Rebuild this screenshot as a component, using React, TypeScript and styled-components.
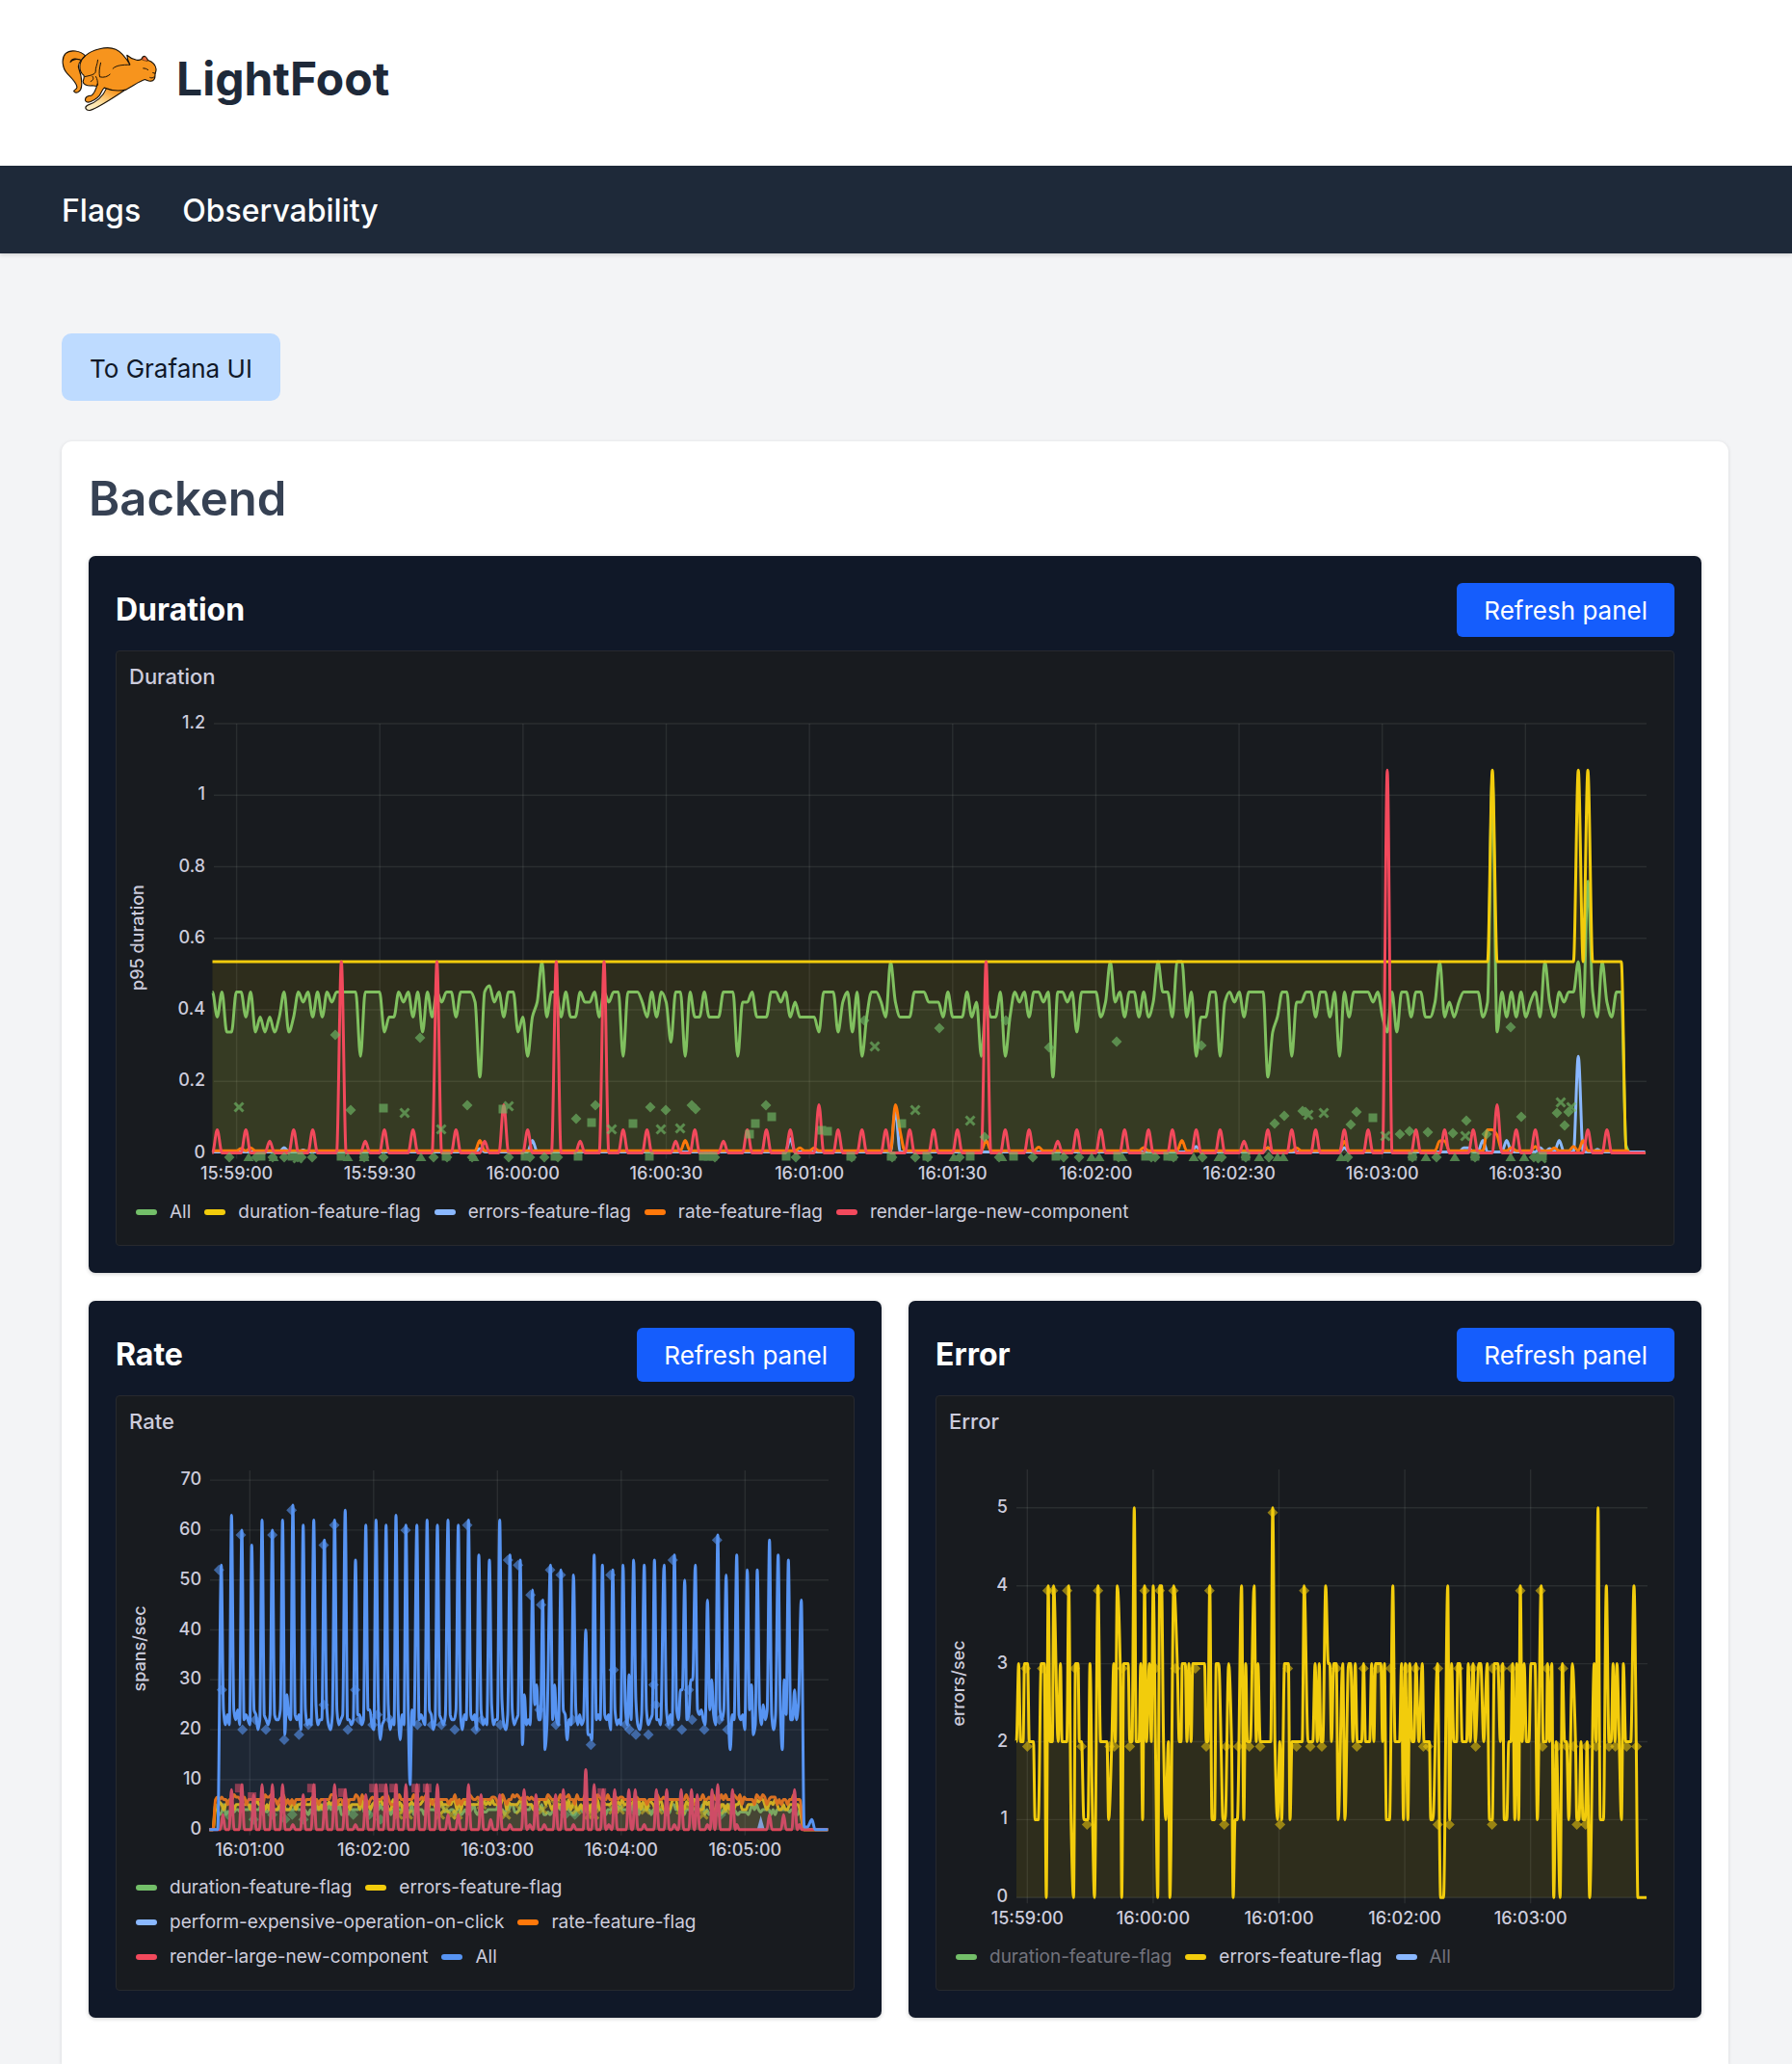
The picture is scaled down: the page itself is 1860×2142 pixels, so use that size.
import React from "react";
import styled, { createGlobalStyle } from "styled-components";

/* ---------- colours ---------- */

const color = {
  green: "#73bf69",
  yellow: "#f2cc0c",
  lightBlue: "#8ab8ff",
  orange: "#ff780a",
  red: "#f2495c",
  blue: "#5794f2",
  text: "#ccccdc",
  grid: "rgba(204, 220, 204, 0.1)",
};

/* ---------- curve helpers ---------- */

type Point = [number, number];

/* Monotone cubic path: smooth, and never overshoots a sample. */
function curve(points: Point[]): string {
  const n = points.length;
  const slope: number[] = [];
  for (let i = 0; i < n - 1; i++) {
    slope.push((points[i + 1][1] - points[i][1]) / (points[i + 1][0] - points[i][0]));
  }
  const tangent = points.map((_, i) => {
    if (i === 0 || i === n - 1) return 0;
    const a = slope[i - 1];
    const b = slope[i];
    return a * b <= 0 ? 0 : (2 * a * b) / (a + b);
  });
  let d = `M${points[0][0].toFixed(1)} ${points[0][1].toFixed(1)}`;
  for (let i = 0; i < n - 1; i++) {
    const [x0, y0] = points[i];
    const [x1, y1] = points[i + 1];
    const h = (x1 - x0) / 3;
    d += `C${(x0 + h).toFixed(1)} ${(y0 + tangent[i] * h).toFixed(1)} ${(x1 - h).toFixed(1)} ${(y1 - tangent[i + 1] * h).toFixed(1)} ${x1.toFixed(1)} ${y1.toFixed(1)}`;
  }
  return d;
}

function parsePairs(source: string): Point[] {
  return source
    .trim()
    .split(/\s+/)
    .map((item) => item.split(":").map(Number) as Point);
}

interface SeriesProps {
  points: Point[];
  stroke: string;
  base: number;
  fill?: number;
  width?: number;
}

function Series({ points, stroke, base, fill = 0, width = 3 }: SeriesProps) {
  const d = curve(points);
  const last = points[points.length - 1][0];
  return (
    <g>
      {fill > 0 && <path d={`${d}L${last} ${base}L${points[0][0]} ${base}Z`} fill={stroke} opacity={fill} />}
      <path d={d} fill="none" stroke={stroke} strokeWidth={width} strokeLinejoin="round" />
    </g>
  );
}

type Shape = "diamond" | "square" | "cross" | "triangle";

function Exemplar({ shape, x, y, fill }: { shape: Shape; x: number; y: number; fill: string }) {
  switch (shape) {
    case "diamond":
      return <path d={`M${x - 5.5} ${y}l5.5 -5.5l5.5 5.5l-5.5 5.5z`} fill={fill} />;
    case "square":
      return <path d={`M${x - 4.5} ${y - 4.5}h9v9h-9z`} fill={fill} />;
    case "triangle":
      return <path d={`M${x - 5.5} ${y + 4}l5.5 -9l5.5 9z`} fill={fill} />;
    default:
      return <path d={`M${x - 4.5} ${y - 4.5}l9 9m0 -9l-9 9`} stroke={fill} strokeWidth={3} />;
  }
}

interface AxisProps {
  left: number;
  right: number;
  top: number;
  bottom: number;
  rows: { at: number; label: string }[];
  columns: { at: number; label: string }[];
  tickY: number;
  name: string;
  nameX: number;
  nameY: number;
}

function Axes({ left, right, top, bottom, rows, columns, tickY, name, nameX, nameY }: AxisProps) {
  return (
    <g>
      {rows.map((row) => (
        <g key={row.label}>
          <line x1={left} x2={right} y1={row.at} y2={row.at} stroke={color.grid} strokeWidth={1.4} />
          <AxisText x={left - 9} y={row.at + 5} textAnchor="end">
            {row.label}
          </AxisText>
        </g>
      ))}
      {columns.map((column) => (
        <g key={column.label}>
          <line x1={column.at} x2={column.at} y1={top} y2={bottom + 6} stroke={color.grid} strokeWidth={1.4} />
          <AxisText x={column.at} y={tickY} textAnchor="middle">
            {column.label}
          </AxisText>
        </g>
      ))}
      <AxisText transform={`translate(${nameX} ${nameY}) rotate(-90)`} textAnchor="middle">
        {name}
      </AxisText>
    </g>
  );
}

/* ---------- duration chart: one sample a second ---------- */

const DURATION_LEVELS: Record<string, number> = {
  A: 0.45, B: 0.422, C: 0.38, D: 0.338, E: 0.31, F: 0.27, G: 0.212, H: 0.535, I: 0.467, K: 1.05, L: 0.76, O: 0.02, Z: 0,
};

/* Ten samples to a group. */
const DURATION_ALL = [
  "ACADDAACAD CDCDCADCAB ACACABAAAA AFAAAADCCA BACADACABA",
  "ACAAABGAIB ACAADCFCBH CAACACCABB ACABAAFAAA BCACABEAAF",
  "ACCACCCAAA FBBACCCAAB ACBCCCCDAA ADBADAFCAA BCHBCCCAAA",
  "BBBCACCCAC BFBCCAFCAB ACAABAGAAB ADAAAACBHB ACAACACBHA",
  "ACHHCAFCCA AFBABACAAA AGDCAAFBBA ACAACAFACA AAABACDADA",
  "ACAACCBHCB CBAAAACBKD ACACACBACH BCABAAHCLA CHBCAAOZZZ Z",
]
  .join("")
  .replace(/ /g, "");

const dx = (second: number) => 220.5 + second * 4.957;
const dy = (value: number) => 1196.5 - value * 371.2;

function sparse(base: number, peaks: string, count = 301): Point[] {
  const values = Array.from({ length: count }, () => base);
  parsePairs(peaks).forEach(([i, v]) => {
    values[i] = v;
  });
  return values.map((v, i) => [dx(i), dy(v)]);
}

const durationAll: Point[] = DURATION_ALL.split("").map((level, i) => [dx(i), dy(DURATION_LEVELS[level])]);
const durationFlag = sparse(0.535, "268:1.07 286:1.07 288:1.07 296:0.01 297:0 298:0 299:0 300:0");
const durationErrors = sparse(
  0.003,
  "15:0.015 19:0.008 67:0.035 56:0.012 121:0.04 143:0.12 206:0.018 221:0.015 237:0.015 262:0.014 263:0.014 266:0.035 271:0.035 278:0.015 280:0.012 282:0.035 286:0.27 290:0.01"
);
const durationRate = sparse(
  0.006,
  "6:0.012 8:0.014 56:0.035 99:0.035 123:0.014 126:0.014 143:0.135 144:0.06 162:0.035 173:0.016 195:0.015 203:0.035 221:0.015 227:0.014 237:0.032 257:0.034 258:0.034 267:0.065 268:0.065 269:0.05 272:0.015 277:0.018 281:0.014 285:0.018 287:0.035 297:0 298:0 299:0 300:0"
);
const durationRender = sparse(
  0,
  "1:.065 7:.065 12:.033 17:.065 21:.065 27:.535 32:.033 36:.065 42:.065 47:.535 51:.065 57:.033 61:.135 66:.065 72:.535 77:.033 82:.535 86:.065 91:.065 97:.033 101:.065 107:.033 112:.065 116:.065 121:.065 127:.135 131:.065 136:.065 141:.065 146:.065 151:.065 156:.065 162:.535 166:.065 171:.065 177:.033 181:.065 186:.065 191:.065 196:.065 201:.065 206:.065 211:.065 216:.033 221:.065 226:.065 231:.065 237:.065 242:.065 246:1.07 252:.065 258:.065 264:.065 269:.135 273:.065 277:.065 288:.065 292:.065"
);

const DURATION_EXEMPLARS: Record<Shape, string> = {
  cross:
    "248:1149 420:1155 458:1172 528:1148 635:1172 686:1172 706:1171 908:1086 950:1152 1007:1163 1358:1157 1374:1155 1438:1179 1521:1179 1620:1144 1631:1149 1600:1202 309:1202",
  diamond:
    "348:1074 436:1077 364:1152 485:1147 598:1161 618:1147 675:1149 691:1152 718:1147 722:1151 795:1147 975:1067 1159:1081 897:1059 1044:1059 1089:1087 1247:1085 1022:1180 1323:1166 1333:1158 1352:1153 1355:1154 1402:1167 1408:1154 1453:1177 1463:1174 1482:1175 1508:1176 1522:1163 1568:1066 1579:1159 1616:1155 1624:1168 1628:1154 1543:1177 " +
    [238, 266, 283, 295, 309, 313, 324, 378, 398, 450, 464, 490, 528, 550, 565, 579, 742, 826, 884, 926, 950, 963, 996, 1037, 1072, 1104, 1120, 1161, 1195, 1199, 1218, 1248, 1268, 1293, 1317, 1399, 1466, 1491, 1531, 1592, 1596]
      .map((x) => `${x}:1201`)
      .join(" "),
  square:
    "398:1150 522:1151 614:1165 657:1166 778:1177 784:1166 801:1159 853:1173 859:1174 936:1166 1425:1160 " +
    [271, 303, 310, 354, 378, 463, 545, 576, 600, 674, 730, 735, 740, 816, 883, 925, 962, 1007, 1052, 1096, 1160, 1189, 1212, 1217, 1293, 1466, 1531, 1601]
      .map((x) => `${x}:1200`)
      .join(" "),
  triangle: [258, 284, 361, 378, 437, 492, 990, 1040, 1133, 1141, 1165, 1239, 1265, 1307, 1326, 1332, 1392, 1480, 1510, 1568, 1582]
    .map((x) => `${x}:1201`)
    .join(" "),
};

const DURATION_TIMES = [
  "15:59:00", "15:59:30", "16:00:00", "16:00:30", "16:01:00", "16:01:30", "16:02:00", "16:02:30", "16:03:00", "16:03:30",
];

function DurationChart() {
  const base = dy(0);
  return (
    <Plot viewBox="121 720 1616 520" role="img" aria-label="p95 duration over time">
      <Axes
        left={222}
        right={1709}
        top={751}
        bottom={base}
        rows={["0", "0.2", "0.4", "0.6", "0.8", "1", "1.2"].map((label) => ({ label, at: dy(Number(label)) }))}
        columns={DURATION_TIMES.map((label, i) => ({ label, at: 245.6 + i * 148.64 }))}
        tickY={1224}
        name="p95 duration"
        nameX={149}
        nameY={973}
      />
      <Series points={durationAll} stroke={color.green} base={base} fill={0.1} />
      <Series points={durationFlag} stroke={color.yellow} base={base} fill={0.1} />
      <Series points={durationErrors} stroke={color.lightBlue} base={base} />
      <Series points={durationRate} stroke={color.orange} base={base} />
      <Series points={durationRender} stroke={color.red} base={base} />
      <g opacity={0.62}>
        {(Object.keys(DURATION_EXEMPLARS) as Shape[]).map((shape) =>
          parsePairs(DURATION_EXEMPLARS[shape]).map(([x, y], i) => (
            <Exemplar key={`${shape}${i}`} shape={shape} x={x} y={y} fill={color.green} />
          ))
        )}
      </g>
    </Plot>
  );
}

/* ---------- rate chart: t runs in thirds of a plot unit ---------- */

const rx = (t: number) => 90 + t / 3;
const ry = (value: number) => 1898.7 - value * 5.18;

const RATE_PEAKS = parsePairs(
  "419:53 451:63 483:60 514:57 546:62 578:60 610:62 642:65 674:61 707:62 740:58 772:62 805:64 837:54 869:61 901:62 932:61 963:63 994:61 1028:61 1060:62 1092:61 1125:62 1157:61 1189:62 1221:55 1254:54 1286:62 1318:55 1350:54 1388:48 1420:46 1444:53 1477:52 1516:51 1554:40 1580:55 1606:53 1638:52 1670:53 1703:54 1736:53 1768:54 1798:53 1830:55 1862:50 1895:53 1933:46 1965:59 1991:51 2024:55 2057:52 2088:52 2126:58 2153:55 2185:54 2225:46"
);
const RATE_NOTCHES = parsePairs(
  "617:19 625:27 749:25 914:18 977:18 1009:9 1356:17 1363:27 1399:29 1427:16 1459:29 1498:18 1564:19 1573:18 1688:31 1852:28 1884:30 1915:24 1947:30 2003:16 2068:29 2075:19 2105:25 2165:16 2171:30 2203:28 2214:25"
);
const RATE_FLOOR = [22, 21, 23, 21, 22, 22, 24, 21, 20, 23, 22, 21, 22, 23, 20, 22, 21];

const rateAll: Point[] = (() => {
  const out: Point[] = [[382, 0], [408, 0]];
  let k = 0;
  RATE_PEAKS.forEach(([t, v], i) => {
    out.push([t, v]);
    const next = RATE_PEAKS[i + 1];
    if (!next) return;
    for (let s = t + 7; s < next[0] - 5; s += 6) {
      const notch = RATE_NOTCHES.find(([nt]) => Math.abs(nt - s) <= 3);
      const first = s === t + 7 ? 2 : 0;
      out.push([s, notch ? notch[1] : RATE_FLOOR[k % RATE_FLOOR.length] + first]);
      k++;
    }
  });
  out.push([2234, 0.5], [2244, 0.5], [2258, 2], [2268, 0], [2308, 0]);
  return out.map(([t, v]) => [rx(t), ry(v)]);
})();

/* Small deterministic wobble round a level, for the flags with a near-constant rate. */
function wobble(level: number, spread: number[], seed: number): Point[] {
  const out: Point[] = [[rx(382), ry(0)], [rx(393), ry(0)]];
  let state = seed;
  for (let t = 401; t <= 2226; t += 6.43) {
    state = (state * 1103515245 + 12345) % 2147483648;
    out.push([rx(t), ry(level + spread[Math.floor((state / 2147483648) * spread.length)])]);
  }
  out.push([rx(2233), ry(0)], [rx(2308), ry(0)]);
  return out;
}

const rateDuration = wobble(4, [0, 0, 0, -1, 1, 0, -0.5], 7);
const rateErrors = wobble(5, [0, 0, 1, -1, 0, -1, 0.5], 19);
const rateRate = wobble(6, [0, 0, 0, 0, 1, -1, 0, 0.5], 41);

const rateRender: Point[] = (() => {
  const peaks = parsePairs(
    "424:3 451:8 483:9 520:7 546:9 578:9 610:9 642:1 674:7 707:9 742:6 772:9 805:8 837:1 869:7 901:9 932:9 963:9 994:9 1028:9 1060:9 1092:9 1125:3 1157:3 1189:9 1228:7 1258:2 1286:7 1318:1 1362:8 1380:1 1399:7 1425:1 1460:7 1484:8 1516:1 1554:12 1580:9 1608:8 1626:1 1644:8 1688:8 1708:8 1736:1 1774:8 1806:8 1830:1 1851:8 1883:8 1901:7 1933:1 1947:8 1965:9 2011:8 2024:1 2126:3 2170:3 2204:8 2219:1"
  );
  const out: Point[] = [[382, 0]];
  peaks.forEach(([t, v]) => {
    const last = out[out.length - 1][0];
    out.push([Math.max(t - 8, last + 1), 0], [t, v], [t + 8, 0]);
  });
  out.push([2308, 0]);
  return out.map(([t, v]) => [rx(t), ry(v)]);
})();

const RATE_EXEMPLARS = parsePairs(
  "412:52 421:28 480:59 485:20 525:22 558:20 578:59 615:18 638:64 661:19 690:21 738:57 738:25 771:61 813:20 836:28 850:22 890:21 905:23 945:22 993:60 1030:21 1075:21 1105:21 1146:20 1185:61 1211:20 1230:22 1288:21 1312:54 1343:53 1382:47 1415:45 1410:24 1443:52 1476:51 1461:21 1513:22 1570:17 1631:51 1641:32 1678:21 1690:20 1710:19 1749:19 1765:29 1773:25 1825:54 1815:21 1853:20 1875:28 1885:22 1923:20 1963:58 1970:22 1995:20"
);
const RATE_RED_EXEMPLARS = parsePairs("475:8.3 515:6.6 700:8.3 796:7.4 893:8.3 922:8.3 956:8.3 1025:8.3 1060:8.3 1604:7.4");
const RATE_GREEN_EXEMPLARS = parsePairs("440:3 520:2 578:3 618:2 640:3 675:2 830:3 880:3 915:2 1490:3 1520:3 1700:4 1975:3");
const RATE_YELLOW_EXEMPLARS = parsePairs(
  "970:3 990:4 1000:3 1100:3 1115:4 1135:3 1155:3 1230:5 1305:3 1350:4 1420:4 1460:5 1525:4 1565:3 1572:4 1580:3 1640:4 1660:4 1740:4 1780:4 1850:4 1880:5 1920:3 1990:4"
);

function RateChart() {
  const base = ry(0);
  return (
    <Plot viewBox="121 1493 765 448" role="img" aria-label="spans per second over time">
      <Axes
        left={218}
        right={860}
        top={1526}
        bottom={base}
        rows={["0", "10", "20", "30", "40", "50", "60", "70"].map((label) => ({ label, at: ry(Number(label)) }))}
        columns={["16:01:00", "16:02:00", "16:03:00", "16:04:00", "16:05:00"].map((label, i) => ({
          label,
          at: 259.3 + i * 128.5,
        }))}
        tickY={1926}
        name="spans/sec"
        nameX={151}
        nameY={1711}
      />
      <g opacity={0.9}>
        <Series points={rateDuration} stroke={color.green} base={base} fill={0.1} />
        <Series points={rateErrors} stroke={color.yellow} base={base} fill={0.1} />
        <path d={`M${rx(2090)} ${base}l3 -11l3 11z`} fill={color.lightBlue} stroke={color.lightBlue} strokeWidth={2} />
        <Series points={rateRate} stroke={color.orange} base={base} fill={0.1} />
        {RATE_GREEN_EXEMPLARS.map(([t, v], i) => (
          <Exemplar key={i} shape="diamond" x={rx(t)} y={ry(v)} fill="rgba(115, 191, 105, 0.6)" />
        ))}
        {RATE_YELLOW_EXEMPLARS.map(([t, v], i) => (
          <Exemplar key={i} shape="cross" x={rx(t)} y={ry(v)} fill="rgba(242, 204, 12, 0.6)" />
        ))}
        <Series points={rateRender} stroke={color.red} base={base} fill={0.1} />
        {RATE_RED_EXEMPLARS.map(([t, v], i) => (
          <Exemplar key={i} shape="square" x={rx(t)} y={ry(v)} fill="rgba(242, 73, 92, 0.6)" />
        ))}
      </g>
      <Series points={rateAll} stroke={color.blue} base={base} fill={0.1} />
      {RATE_EXEMPLARS.map(([t, v], i) => (
        <Exemplar key={i} shape="diamond" x={rx(t)} y={ry(v)} fill="rgba(87, 148, 242, 0.6)" />
      ))}
    </Plot>
  );
}

/* ---------- error chart ---------- */

const ex = (t: number) => 930 + t / 3;
const ey = (value: number) => 1969.3 - value * 80.9;

const ERROR_POINTS = parsePairs(
  "375:2 382:3 388:2 396:2 400:3 410:3 415:2 428:2 433:1 443:1 452:3 462:3 468:0 474:4 480:2 487:2 491:4 505:2 512:3 517:2 532:2 538:4 545:1 553:0 559:3 567:3 571:2 578:2 585:1 598:1 604:3 612:1 618:0 629:4 637:2 657:2 662:1 672:2 678:3 683:2 689:4 698:3 703:0 709:3 723:3 728:2 735:2 742:5 748:2 757:2 762:3 768:1 774:4 780:2 789:3 795:2 801:4 808:2 815:0 821:4 827:4 833:2 840:1 848:2 853:0 865:4 876:3 882:2 888:2 891:3 901:3 906:2 912:3 919:2 924:3 961:3 966:2 971:2 977:4 984:1 992:1 997:3 1005:3 1012:2 1018:1 1025:1 1036:3 1045:2 1050:0 1056:1 1063:1 1076:4 1083:1 1089:3 1094:2 1103:2 1115:4 1122:2 1127:3 1134:2 1167:2 1173:5 1180:2 1188:1 1195:2 1201:1 1210:3 1222:3 1227:1 1233:2 1265:2 1271:4 1283:2 " +
    "1298:2 1305:3 1312:2 1318:3 1323:2 1329:2 1338:4 1346:3 1351:3 1356:2 1363:3 1371:3 1377:1 1391:3 1398:1 1409:3 1416:3 1423:2 1430:3 1436:2 1450:2 1456:3 1462:2 1475:2 1481:3 1488:2 1493:3 1510:3 1515:2 1521:3 1527:1 1537:1 1547:4 1554:2 1568:2 1574:3 1580:1 1586:3 1594:1 1600:3 1607:2 1613:2 1619:3 1628:2 1639:3 1644:2 1661:2 1665:1 1672:1 1686:3 1696:0 1705:0 1718:4 1724:1 1730:3 1737:2 1746:2 1749:3 1756:3 1763:2 1777:2 1782:3 1788:2 1797:3 1804:2 1815:3 1821:3 1830:2 1841:3 1848:1 1857:1 1863:3 1874:3 1882:2 1889:3 1894:1 1902:1 1908:2 1915:2 1920:3 1927:1 1933:3 1939:1 1944:4 1950:2 1956:3 1963:2 1971:2 1977:3 1990:3 1997:1 2009:4 2015:2 2025:2 2029:3 2035:2 2042:3 2048:0 2056:2 2068:0 2075:3 2082:2 2088:2 2095:1 2106:3 2116:2 2120:1 2127:1 2133:2 2139:1 2146:1 2152:2 2160:0 2174:3 2180:2 2186:5 2193:1 2203:1 2212:4 2220:2 2227:2 2233:3 2239:2 2245:3 2252:2 2259:1 2265:3 2272:2 2288:2 2298:4 2305:2 2310:0 2337:0"
).map(([t, v]) => [ex(t), ey(v)] as Point);

const ERROR_EXEMPLARS = parsePairs(
  "472:4 489:4 533:4 629:4 774:4 821:4 864:4 976:4 1271:4 1173:5 404:3 455:3 557:3 705:3 808:3 870:3 932:3 1220:3 409:2 578:2 665:2 680:2 728:2 966:2 1028:2 1065:2 1100:2 1134:2 1247:2 1290:2 595:1 1022:1 1196:1 1944:4 2007:4 1372:3 1456:3 1500:3 1540:3 1590:3 1617:3 1688:3 1751:3 1797:3 1857:3 1887:3 1917:3 2027:3 2077:3 1326:2 1435:2 1642:2 1657:2 1805:2 2013:2 2060:2 2088:2 2110:2 2150:2 2180:2 2220:2 2240:2 2275:2 2306:2 1687:1 1723:1 1856:1 2120:1 2147:1"
);

function ErrorChart() {
  const base = ey(0);
  return (
    <Plot viewBox="972 1493 765 520" role="img" aria-label="errors per second over time">
      <Axes
        left={1055}
        right={1710}
        top={1525}
        bottom={base}
        rows={["0", "1", "2", "3", "4", "5"].map((label) => ({ label, at: ey(Number(label)) }))}
        columns={["15:59:00", "16:00:00", "16:01:00", "16:02:00", "16:03:00"].map((label, i) => ({
          label,
          at: 1066.3 + i * 130.6,
        }))}
        tickY={1997}
        name="errors/sec"
        nameX={1001}
        nameY={1747}
      />
      <Series points={ERROR_POINTS} stroke={color.yellow} base={base} fill={0.1} />
      {ERROR_EXEMPLARS.map(([t, v], i) => (
        <Exemplar key={i} shape="diamond" x={ex(t)} y={ey(v) + 5} fill="rgba(242, 204, 12, 0.55)" />
      ))}
    </Plot>
  );
}

/* ---------- styles ---------- */

const GlobalStyle = createGlobalStyle`
  *, *::before, *::after { box-sizing: border-box; }
  body {
    margin: 0;
    background: #f3f4f6;
    color: #101828;
    font-family: Inter, "Noto Sans", sans-serif;
  }
`;

const Page = styled.div`
  min-height: 100vh;
  display: flex;
  flex-direction: column;
`;

const Header = styled.header`
  display: flex;
  align-items: center;
  gap: 20px;
  padding: 44px 64px 52px;
  background: #fff;
`;

const Logo = styled.svg`
  width: 99px;
  height: 67px;
  flex: none;
`;

const SiteTitle = styled.h1`
  margin: 0;
  font-size: 48px;
  line-height: 76px;
  font-weight: 700;
  color: #1e2939;
`;

const Nav = styled.nav`
  position: relative;
  display: flex;
  gap: 43px;
  padding: 29px 64px 27px;
  background: #1e2939;
  box-shadow: 0 2px 4px rgba(0, 0, 0, 0.12);
`;

const NavLink = styled.a`
  font-size: 32px;
  line-height: 35px;
  font-weight: 500;
  color: #fff;
  text-decoration: none;
`;

const Main = styled.main`
  flex: 1;
  display: flex;
  flex-direction: column;
  align-items: flex-start;
  gap: 42px;
  padding: 83px 66px 0 64px;
`;

const GrafanaLink = styled.a`
  padding: 20px 29px 16px;
  border-radius: 10px;
  background: #bedbff;
  color: #101828;
  font-size: 26px;
  line-height: 34px;
  text-decoration: none;
`;

const Card = styled.section`
  flex: 1;
  align-self: stretch;
  padding: 28px;
  border-radius: 11px 11px 0 0;
  background: #fff;
  box-shadow: 0 1px 4px rgba(0, 0, 0, 0.12);
`;

const SectionTitle = styled.h2`
  margin: 0 0 27px;
  font-size: 49px;
  line-height: 64px;
  font-weight: 600;
  color: #364153;
`;

const PanelGrid = styled.div`
  display: grid;
  grid-template-columns: repeat(2, minmax(0, 1fr));
  gap: 29px 28px;
`;

const PanelBox = styled.article<{ $wide?: boolean }>`
  grid-column: ${(p) => (p.$wide ? "1 / -1" : "auto")};
  display: flex;
  flex-direction: column;
  gap: 14px;
  padding: 28px;
  border-radius: 7px;
  background: #101828;
  box-shadow: 0 1px 4px rgba(0, 0, 0, 0.2);
`;

const PanelHead = styled.div`
  display: flex;
  align-items: center;
  justify-content: space-between;
`;

const PanelTitle = styled.h3`
  margin: 0;
  font-size: 32px;
  line-height: 56px;
  font-weight: 700;
  color: #fff;
`;

const RefreshButton = styled.button`
  padding: 12px 28px 10px;
  border: 0;
  border-radius: 6px;
  background: #155dfc;
  color: #fff;
  font-family: inherit;
  font-size: 26px;
  line-height: 34px;
  cursor: pointer;
`;

const Frame = styled.div`
  flex: 1;
  border: 1px solid #27292e;
  border-radius: 4px;
  background: #181b1f;
  padding: 8px 0 16px;
`;

const FrameTitle = styled.h4`
  margin: 0;
  padding: 0 13px;
  font-size: 22px;
  line-height: 36px;
  font-weight: 500;
  color: ${color.text};
`;

const Plot = styled.svg`
  display: block;
  width: 100%;
  height: auto;
`;

const AxisText = styled.text`
  font-family: Inter, "Noto Sans", sans-serif;
  font-size: 18px;
  font-weight: 500;
  fill: ${color.text};
`;

const Legend = styled.div`
  display: flex;
  flex-wrap: wrap;
  column-gap: 14px;
  padding: 0 20px;
`;

const LegendItem = styled.button<{ $dim?: boolean }>`
  display: flex;
  align-items: center;
  gap: 13px;
  padding: 0;
  border: 0;
  background: none;
  color: ${(p) => (p.$dim ? "rgba(204, 204, 220, 0.5)" : color.text)};
  font-family: inherit;
  font-size: 19px;
  line-height: 36px;
  cursor: pointer;
`;

const Swatch = styled.span<{ $color: string }>`
  width: 22px;
  height: 6px;
  border-radius: 3px;
  background: ${(p) => p.$color};
`;

/* ---------- components ---------- */

interface LegendEntry {
  label: string;
  color: string;
  dim?: boolean;
}

interface PanelProps {
  title: string;
  wide?: boolean;
  legend: LegendEntry[];
  children: React.ReactNode;
}

function Panel({ title, wide, legend, children }: PanelProps) {
  return (
    <PanelBox $wide={wide}>
      <PanelHead>
        <PanelTitle>{title}</PanelTitle>
        <RefreshButton type="button">Refresh panel</RefreshButton>
      </PanelHead>
      <Frame>
        <FrameTitle>{title}</FrameTitle>
        {children}
        <Legend>
          {legend.map((entry) => (
            <LegendItem key={entry.label} type="button" $dim={entry.dim}>
              <Swatch $color={entry.color} />
              {entry.label}
            </LegendItem>
          ))}
        </Legend>
      </Frame>
    </PanelBox>
  );
}

function CatLogo() {
  return (
    <Logo viewBox="39 40 298 200" aria-hidden="true">
      <defs>
        <linearGradient id="paw" x1="1" y1="0" x2="0" y2="1">
          <stop offset="0.2" stopColor="#f7941d" />
          <stop offset="0.65" stopColor="#fde0a0" />
          <stop offset="1" stopColor="#fff6d8" />
        </linearGradient>
      </defs>
      <g stroke="#1a1208" strokeWidth="3.4" strokeLinejoin="round" strokeLinecap="round" fill="#f7941d">
        <path
          d="M180 166C168 194 146 212 119 221C110 226 113 238 128 236C150 230 190 204 241 170L210 166Z"
          fill="url(#paw)"
        />
        <path d="M113 66C98 50 66 45 51 59C37 74 41 104 56 121C73 138 87 151 87 164C86 171 79 171 77 177C84 187 100 177 101 161C103 142 98 120 92 104C90 96 94 86 100 80C88 74 72 76 66 86C70 74 84 72 100 80Z" />
        <path d="M113 66C133 47 180 34 208 46C228 55 242 76 252 93C247 84 244 74 243 64C252 72 262 77 273 79C278 80 283 80 288 77C291 70 297 67 300 68C305 72 307 77 309 80C323 85 332 94 334 107C335 116 330 119 331 127C331 138 326 144 318 145C310 146 304 141 299 140C284 144 262 160 239 172C217 177 192 174 172 166C165 172 164 180 157 190C148 202 142 202 134 207C126 212 115 213 113 206C111 196 120 190 132 190C142 184 147 168 151 154C153 162 142 161 134 159C119 161 104 155 106 145C108 137 111 133 108 127C98 119 94 105 97 90C100 79 106 71 113 66Z" />
        <path d="M291 78C291 71 297 67 301 69C305 73 306 78 307 82Z" fill="#ef6a3a" strokeWidth="1.5" />
        <g fill="none" strokeWidth="3">
          <path d="M152 79C151 93 144 103 145 115C145 124 128 128 112 131M161 88C157 105 155 119 158 132C171 135 183 131 190 124" />
          <path d="M135 130C141 137 137 143 130 146M146 131C151 139 152 148 151 156" />
          <path d="M199 106C209 95 230 94 252 94" />
          <path d="M294 105C300 105 305 107 309 110M315 134C320 137 325 135 329 131M324 119L331 121" />
        </g>
      </g>
    </Logo>
  );
}

export default function App() {
  return (
    <Page>
      <GlobalStyle />
      <Header>
        <CatLogo />
        <SiteTitle>LightFoot</SiteTitle>
      </Header>
      <Nav>
        <NavLink href="#flags">Flags</NavLink>
        <NavLink href="#observability">Observability</NavLink>
      </Nav>
      <Main>
        <GrafanaLink href="#grafana">To Grafana UI</GrafanaLink>
        <Card>
          <SectionTitle>Backend</SectionTitle>
          <PanelGrid>
            <Panel
              title="Duration"
              wide
              legend={[
                { label: "All", color: color.green },
                { label: "duration-feature-flag", color: color.yellow },
                { label: "errors-feature-flag", color: color.lightBlue },
                { label: "rate-feature-flag", color: color.orange },
                { label: "render-large-new-component", color: color.red },
              ]}
            >
              <DurationChart />
            </Panel>
            <Panel
              title="Rate"
              legend={[
                { label: "duration-feature-flag", color: color.green },
                { label: "errors-feature-flag", color: color.yellow },
                { label: "perform-expensive-operation-on-click", color: color.lightBlue },
                { label: "rate-feature-flag", color: color.orange },
                { label: "render-large-new-component", color: color.red },
                { label: "All", color: color.blue },
              ]}
            >
              <RateChart />
            </Panel>
            <Panel
              title="Error"
              legend={[
                { label: "duration-feature-flag", color: color.green, dim: true },
                { label: "errors-feature-flag", color: color.yellow },
                { label: "All", color: color.lightBlue, dim: true },
              ]}
            >
              <ErrorChart />
            </Panel>
          </PanelGrid>
        </Card>
      </Main>
    </Page>
  );
}
